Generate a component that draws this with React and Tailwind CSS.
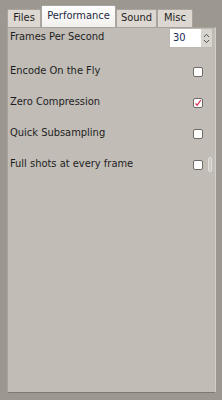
import React from "react";

const tabs = [
  { name: "Files", w: "w-[34px]" },
  { name: "Performance", w: "w-[75px]" },
  { name: "Sound", w: "w-[41px]" },
  { name: "Misc", w: "w-[36px]" },
];

const rows = [
  { label: "Encode On the Fly", checked: false },
  { label: "Zero Compression", checked: true },
  { label: "Quick Subsampling", checked: false },
  { label: "Full shots at every frame", checked: false, scroll: true },
];

const CheckBox = ({ checked }) => (
  <div className="w-[10px] h-[10px] rounded-[2px] border border-[#6f6a64] bg-white flex items-center justify-center">
    {checked && (
      <svg width="8" height="8" viewBox="0 0 8 8">
        <path d="M1.5 4.5 L3.2 6.2 L6.8 1" fill="none" stroke="#e0305a" strokeWidth="1.2" />
      </svg>
    )}
  </div>
);

export default function App() {
  return (
    <div
      className="w-[222px] h-[400px] bg-[#9c978f] flex flex-col pl-[7px] pr-[6px] pb-[7px] text-[11px] text-[#1e1e1e]"
      style={{ fontFamily: '"DejaVu Sans Condensed", "DejaVu Sans", sans-serif' }}
    >
      {/* tab bar */}
      <div className="h-[27px] flex items-end">
        {tabs.map((t) => {
          const active = t.name === "Performance";
          return (
            <div
              key={t.name}
              className={
                active
                  ? `${t.w} h-[22px] flex items-center justify-center rounded-t-[2px] border border-b-0 border-[#a9a49d] bg-gradient-to-b from-white to-[#f2f0ed] text-[#1e2a44] z-10`
                  : `${t.w} h-[18px] flex items-center justify-center rounded-t-[2px] border border-b-0 border-[#a9a49d] bg-[#dcd7d0]`
              }
            >
              {t.name}
            </div>
          );
        })}
      </div>

      {/* panel */}
      <div className="flex-1 bg-[#c1bcb6] border-l border-t border-[#a7a29b] border-r border-r-[#d2cec8] border-b border-b-[#7e7973] rounded-b-[2px]">
        <div className="flex items-center justify-between h-[20px] pl-[2px] pr-[2px]">
          <span className="mt-[-2px]">Frames Per Second</span>
          <div className="flex h-[20px] border border-[#bdb8b1]">
            <div className="w-[31px] bg-white flex items-center pl-[3px] text-[#1d2a55]">30</div>
            <div className="w-[11px] bg-[#d8d4ce] flex flex-col items-center justify-center gap-[1px]">
              <svg width="7" height="5" viewBox="0 0 7 5">
                <path d="M1 4 L3.5 1.3 L6 4" fill="none" stroke="#555" strokeWidth="1" />
              </svg>
              <svg width="7" height="5" viewBox="0 0 7 5">
                <path d="M1 1 L3.5 3.7 L6 1" fill="none" stroke="#555" strokeWidth="1" />
              </svg>
            </div>
          </div>
        </div>

        <div className="flex flex-col pt-[8px]">
          {rows.map((r) => (
            <div key={r.label} className="h-[31px] flex items-center pl-[2px] pr-[3px]">
              <span className="flex-1">{r.label}</span>
              <CheckBox checked={r.checked} />
              <div className="w-[9px] flex justify-end">
                {r.scroll && (
                  <div className="w-[4px] h-[15px] rounded-[2px] border border-[#e2ded9] bg-[#cbc7c1]" />
                )}
              </div>
            </div>
          ))}
        </div>
      </div>
    </div>
  );
}
